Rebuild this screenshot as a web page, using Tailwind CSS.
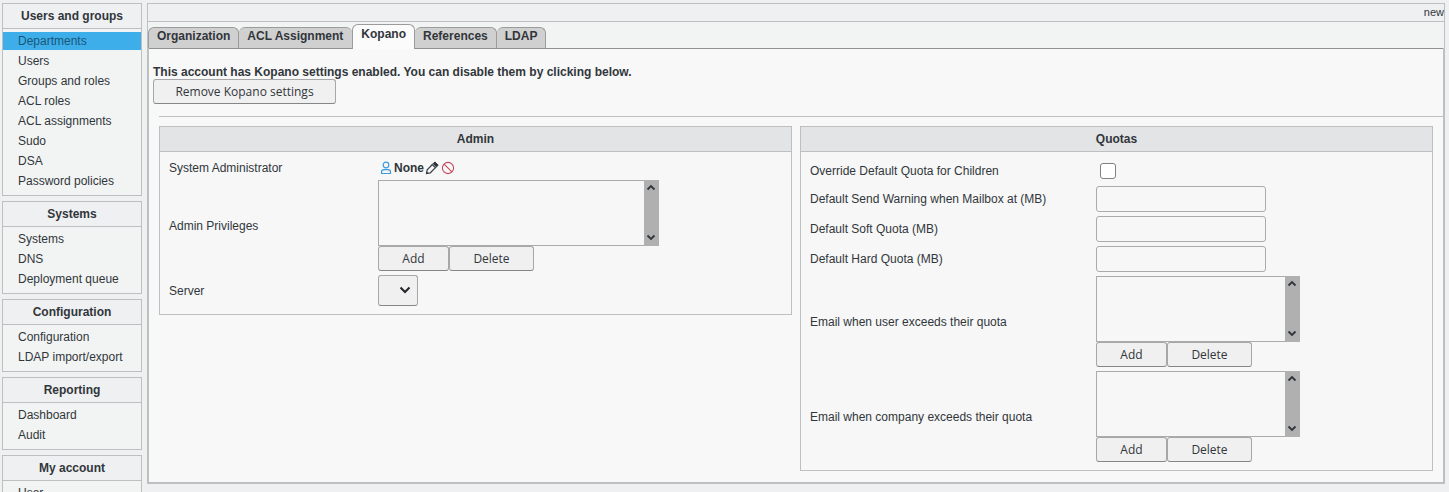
<!DOCTYPE html>
<html lang="en">
<head>
<meta charset="utf-8">
<title>Departments</title>
<script src="https://cdn.jsdelivr.net/npm/@tailwindcss/browser@4"></script>
</head>
<body class="h-screen overflow-hidden bg-[#eff0f1] font-['Liberation_Sans',Arial,sans-serif] text-xs text-[#31363b]">
<div class="flex items-start gap-[5px] pt-[3px] pr-1 pl-0.5">

  <nav class="flex w-[140px] shrink-0 flex-col gap-[5px]" aria-label="Main menu">
    <section class="border border-[#bdbfc1] bg-[#f2f4f3]">
      <h2 class="h-[25px] border-b border-[#bdbfc1] bg-[#eff0f1] text-center leading-6 font-bold">Users and groups</h2>
      <ul class="flex flex-col gap-0.5 pt-[3px] pb-[5px] leading-[18px]">
        <li><a href="#" aria-current="page" class="block bg-[#3daee9] pl-[15px] text-[#1b5679]">Departments</a></li>
        <li><a href="#" class="block pl-[15px]">Users</a></li>
        <li><a href="#" class="block pl-[15px]">Groups and roles</a></li>
        <li><a href="#" class="block pl-[15px]">ACL roles</a></li>
        <li><a href="#" class="block pl-[15px]">ACL assignments</a></li>
        <li><a href="#" class="block pl-[15px]">Sudo</a></li>
        <li><a href="#" class="block pl-[15px]">DSA</a></li>
        <li><a href="#" class="block pl-[15px]">Password policies</a></li>
      </ul>
    </section>
    <section class="border border-[#bdbfc1] bg-[#f2f4f3]">
      <h2 class="h-[25px] border-b border-[#bdbfc1] bg-[#eff0f1] text-center leading-6 font-bold">Systems</h2>
      <ul class="flex flex-col gap-0.5 pt-[3px] pb-[5px] leading-[18px]">
        <li><a href="#" class="block pl-[15px]">Systems</a></li>
        <li><a href="#" class="block pl-[15px]">DNS</a></li>
        <li><a href="#" class="block pl-[15px]">Deployment queue</a></li>
      </ul>
    </section>
    <section class="border border-[#bdbfc1] bg-[#f2f4f3]">
      <h2 class="h-[25px] border-b border-[#bdbfc1] bg-[#eff0f1] text-center leading-6 font-bold">Configuration</h2>
      <ul class="flex flex-col gap-0.5 pt-[3px] pb-[5px] leading-[18px]">
        <li><a href="#" class="block pl-[15px]">Configuration</a></li>
        <li><a href="#" class="block pl-[15px]">LDAP import/export</a></li>
      </ul>
    </section>
    <section class="border border-[#bdbfc1] bg-[#f2f4f3]">
      <h2 class="h-[25px] border-b border-[#bdbfc1] bg-[#eff0f1] text-center leading-6 font-bold">Reporting</h2>
      <ul class="flex flex-col gap-0.5 pt-[3px] pb-[5px] leading-[18px]">
        <li><a href="#" class="block pl-[15px]">Dashboard</a></li>
        <li><a href="#" class="block pl-[15px]">Audit</a></li>
      </ul>
    </section>
    <section class="border border-[#bdbfc1] bg-[#f2f4f3]">
      <h2 class="h-[25px] border-b border-[#bdbfc1] bg-[#eff0f1] text-center leading-6 font-bold">My account</h2>
      <ul class="flex flex-col gap-0.5 pt-[3px] pb-[5px] leading-[18px]">
        <li><a href="#" class="block pl-[15px]">User</a></li>
      </ul>
    </section>
  </nav>

  <main class="min-w-0 flex-1">
    <div class="h-[19px] border border-[#bdbfc1] text-right text-[11px] leading-[17px]">new</div>

    <div class="flex h-[26px] items-end border-x border-[#bdbfc1] bg-[#f2f4f3] font-bold leading-[17px]">
      <div role="tablist" class="flex items-end">
        <button type="button" role="tab" class="h-[21px] rounded-t-md border-x border-t border-[#9a9b9c] bg-[#d0d0d0] px-2 pb-1 font-bold">Organization</button>
        <button type="button" role="tab" class="h-[21px] rounded-t-md border-t border-[#9a9b9c] bg-[#d0d0d0] pr-[9px] pb-1 pl-2 font-bold">ACL Assignment</button>
        <button type="button" role="tab" aria-selected="true" class="relative z-10 -mb-px h-[25px] rounded-t-md border-x border-t border-[#9a9b9c] bg-[#fbfbfb] px-2 pb-1.5 font-bold">Kopano</button>
        <button type="button" role="tab" class="h-[21px] rounded-t-md border-t border-r border-[#9a9b9c] bg-[#d0d0d0] px-2 pb-1 font-bold">References</button>
        <button type="button" role="tab" class="h-[21px] rounded-t-md border-t border-r border-[#9a9b9c] bg-[#d0d0d0] px-2 pb-1 font-bold">LDAP</button>
      </div>
    </div>

    <div class="border-x-2 border-b-2 border-[#bdbfc1] bg-[#f8f8f8]">
      <div class="border-t border-[#8f9091] px-1 pt-4">
        <p class="leading-[14px] font-bold">This account has Kopano settings enabled. You can disable them by clicking below.</p>
        <button type="button" class="block h-[25px] w-[183px] rounded-[3px] border border-[#a6a7a8] border-b-[#858687] bg-[#f0f0f0] font-['Open_Sans',sans-serif]">Remove Kopano settings</button>
      </div>
      <hr class="mt-3 ml-2.5 border-[#bdbfc1]">

      <div class="grid grid-cols-2 items-start gap-2 px-2.5 pt-[9px] pb-[11px]">
        <section class="border border-[#bdbfc1] bg-[#f7f7f7]">
          <h3 class="h-[25px] border-b border-[#bdbfc1] bg-[#e3e4e5] text-center leading-6 font-bold">Admin</h3>
          <div class="grid grid-cols-[209px_1fr] items-center gap-y-1 px-[9px] pt-2 pb-2">
            <span>System Administrator</span>
            <div class="flex h-4 items-center">
              <svg class="size-4" viewBox="0 0 16 16" fill="none" stroke="#3d9be0" stroke-width="1.2" aria-hidden="true"><circle cx="8" cy="5" r="2.8"/><path d="M3.500 13.500v-1.200c0-1.500 1.100-2.600 2.600-2.600h3.800c1.500 0 2.600 1.100 2.600 2.600v1.200z"/></svg>
              <b>None</b>
              <button type="button" aria-label="Edit"><svg class="size-4" viewBox="0 0 16 16" aria-hidden="true"><path d="M2.600 13.400l.6-3.700 5.200-5.200 3.100 3.100-5.200 5.200z" fill="#f7f7f7" stroke="#41464b" stroke-width="1.300"/><path d="M8.300 4.600l2.600-2.700 3.300 3.300-2.700 2.600z" fill="#31363b" stroke="#31363b" stroke-linejoin="round"/><path d="M2 14l.4-2.600 2.200 2.200z" fill="#31363b"/><path d="M8.600 3.900l3.500 3.500" stroke="#f7f7f7" stroke-width=".6"/></svg></button>
              <button type="button" aria-label="Remove"><svg class="size-4" viewBox="0 0 16 16" fill="none" stroke="#c4485c" stroke-width="1.100" aria-hidden="true"><circle cx="8" cy="8" r="5.600"/><path d="M4.100 4.100l7.800 7.800"/></svg></button>
            </div>

            <label for="privileges">Admin Privileges</label>
            <div>
              <div class="flex h-[66px] w-[281px]">
                <select id="privileges" multiple class="min-w-0 flex-1 appearance-none border border-r-0 border-[#a9abac] bg-[#f7f7f7]"></select>
                <div class="flex w-[15px] flex-col items-center justify-between bg-[#b0b0b0] pt-1 pr-0.5 pb-[5px]">
                  <svg class="h-2 w-2.5" viewBox="0 0 10 8" fill="none" stroke="#31363b" stroke-width="1.8" aria-hidden="true"><path d="M1.500 5.500L5 2l3.500 3.500"/></svg>
                  <svg class="h-2 w-2.5" viewBox="0 0 10 8" fill="none" stroke="#31363b" stroke-width="1.8" aria-hidden="true"><path d="M1.500 2.500L5 6l3.500-3.500"/></svg>
                </div>
              </div>
              <div class="flex font-['Open_Sans',sans-serif]">
                <button type="button" class="h-[25px] w-[71px] rounded-[3px] border border-[#a6a7a8] border-b-[#858687] bg-[#f0f0f0]">Add</button>
                <button type="button" class="h-[25px] w-[85px] rounded-[3px] border border-[#a6a7a8] border-b-[#858687] bg-[#f0f0f0]">Delete</button>
              </div>
            </div>

            <label for="server">Server</label>
            <div class="relative h-[31px] w-10">
              <select id="server" class="size-full appearance-none rounded-[3px] border border-[#a6a7a8] border-b-[#858687] bg-[#f0f0f0]"><option></option></select>
              <svg class="pointer-events-none absolute top-[11px] right-[7px] h-2 w-3" viewBox="0 0 12 8" fill="none" stroke="#232629" stroke-width="2" aria-hidden="true"><path d="M1.500 1.500L6 6l4.500-4.500"/></svg>
            </div>
          </div>
        </section>

        <section class="border border-[#bdbfc1] bg-[#f7f7f7]">
          <h3 class="h-[25px] border-b border-[#bdbfc1] bg-[#e3e4e5] text-center leading-6 font-bold">Quotas</h3>
          <div class="grid grid-cols-[286px_1fr] items-center gap-y-1 px-[9px] pt-2 pb-2">
            <label for="override">Override Default Quota for Children</label>
            <div class="flex h-[22px] items-center pl-1">
              <input id="override" type="checkbox" class="size-4 appearance-none rounded-[3px] border border-[#7f8283] bg-white">
            </div>
            <label for="warn">Default Send Warning when Mailbox at (MB)</label>
            <input id="warn" type="text" class="h-[26px] w-[170px] rounded-[3px] border border-[#a9abac] bg-[#f7f7f7] px-1.5">
            <label for="soft">Default Soft Quota (MB)</label>
            <input id="soft" type="text" class="h-[26px] w-[170px] rounded-[3px] border border-[#a9abac] bg-[#f7f7f7] px-1.5">
            <label for="hard">Default Hard Quota (MB)</label>
            <input id="hard" type="text" class="h-[26px] w-[170px] rounded-[3px] border border-[#a9abac] bg-[#f7f7f7] px-1.5">

            <label for="mail-user">Email when user exceeds their quota</label>
            <div>
              <div class="flex h-[66px] w-[204px]">
                <select id="mail-user" multiple class="min-w-0 flex-1 appearance-none border border-r-0 border-[#a9abac] bg-[#f7f7f7]"></select>
                <div class="flex w-[15px] flex-col items-center justify-between bg-[#b0b0b0] pt-1 pr-0.5 pb-[5px]">
                  <svg class="h-2 w-2.5" viewBox="0 0 10 8" fill="none" stroke="#31363b" stroke-width="1.8" aria-hidden="true"><path d="M1.500 5.500L5 2l3.500 3.500"/></svg>
                  <svg class="h-2 w-2.5" viewBox="0 0 10 8" fill="none" stroke="#31363b" stroke-width="1.8" aria-hidden="true"><path d="M1.500 2.500L5 6l3.500-3.500"/></svg>
                </div>
              </div>
              <div class="flex font-['Open_Sans',sans-serif]">
                <button type="button" class="h-[25px] w-[71px] rounded-[3px] border border-[#a6a7a8] border-b-[#858687] bg-[#f0f0f0]">Add</button>
                <button type="button" class="h-[25px] w-[85px] rounded-[3px] border border-[#a6a7a8] border-b-[#858687] bg-[#f0f0f0]">Delete</button>
              </div>
            </div>

            <label for="mail-company">Email when company exceeds their quota</label>
            <div>
              <div class="flex h-[66px] w-[204px]">
                <select id="mail-company" multiple class="min-w-0 flex-1 appearance-none border border-r-0 border-[#a9abac] bg-[#f7f7f7]"></select>
                <div class="flex w-[15px] flex-col items-center justify-between bg-[#b0b0b0] pt-1 pr-0.5 pb-[5px]">
                  <svg class="h-2 w-2.5" viewBox="0 0 10 8" fill="none" stroke="#31363b" stroke-width="1.8" aria-hidden="true"><path d="M1.500 5.500L5 2l3.500 3.500"/></svg>
                  <svg class="h-2 w-2.5" viewBox="0 0 10 8" fill="none" stroke="#31363b" stroke-width="1.8" aria-hidden="true"><path d="M1.500 2.500L5 6l3.500-3.500"/></svg>
                </div>
              </div>
              <div class="flex font-['Open_Sans',sans-serif]">
                <button type="button" class="h-[25px] w-[71px] rounded-[3px] border border-[#a6a7a8] border-b-[#858687] bg-[#f0f0f0]">Add</button>
                <button type="button" class="h-[25px] w-[85px] rounded-[3px] border border-[#a6a7a8] border-b-[#858687] bg-[#f0f0f0]">Delete</button>
              </div>
            </div>
          </div>
        </section>
      </div>
    </div>
  </main>
</div>
</body>
</html>
